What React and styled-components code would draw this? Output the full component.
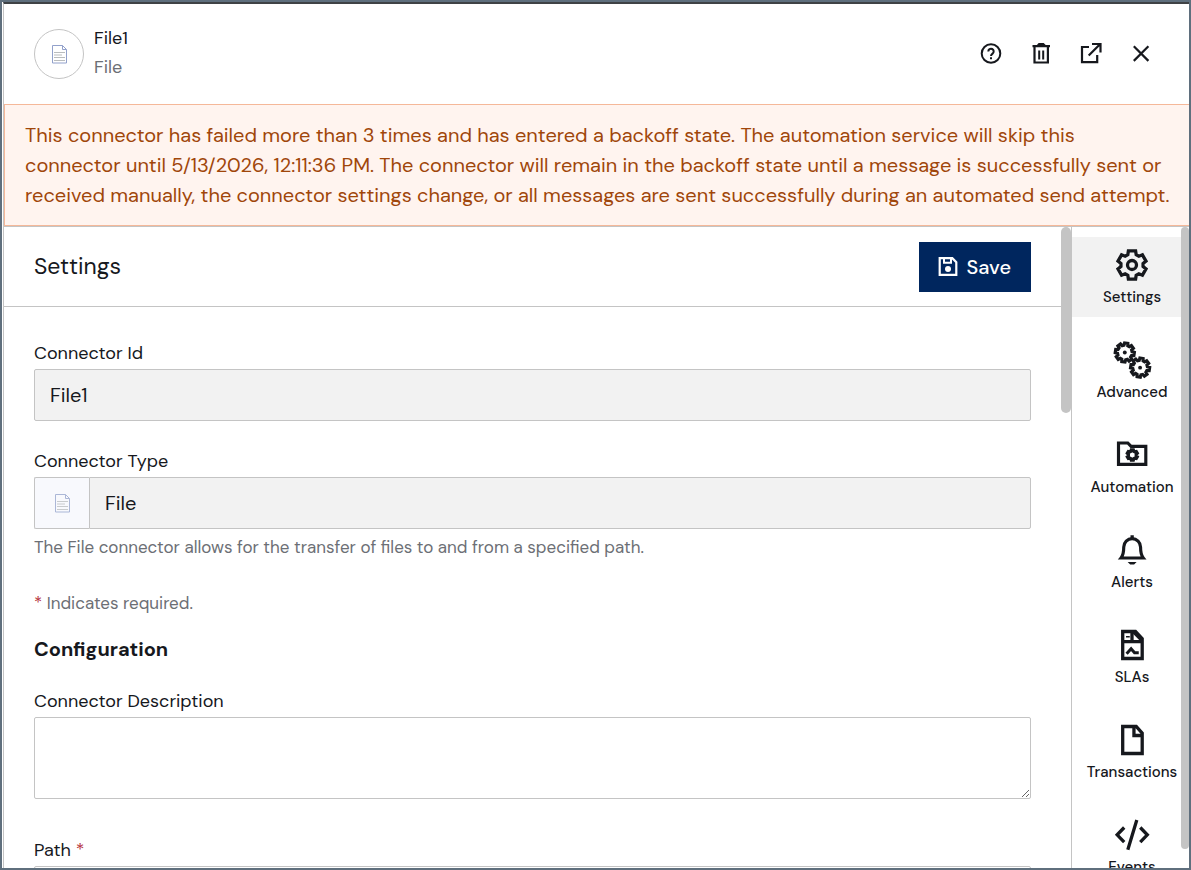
import React, { useState } from 'react';
import styled, { createGlobalStyle } from 'styled-components';

const GlobalStyle = createGlobalStyle`
  * {
    box-sizing: border-box;
  }
  body {
    margin: 0;
    background: #fff;
    color: #16181d;
    font-family: 'DM Sans', 'Open Sans', sans-serif;
    font-size: 20px;
  }
  button, input, textarea {
    font: inherit;
    color: inherit;
  }
`;

const Frame = styled.div`
  height: 100vh;
  border: 2px solid #5f6f7d;
  overflow: hidden;
`;

const Panel = styled.main`
  height: 100%;
  display: flex;
  flex-direction: column;
  margin-left: 1px;
  border-top: 2px solid #3f4245;
  border-left: 1px solid #c4c4c4;
`;

const Header = styled.header`
  display: flex;
  align-items: center;
  flex-shrink: 0;
  height: 100px;
  padding: 0 28px 0 30px;
`;

const Avatar = styled.div`
  display: flex;
  align-items: center;
  justify-content: center;
  width: 50px;
  height: 50px;
  margin-right: 10px;
  border: 1px solid #c4c4c4;
  border-radius: 50%;
`;

const Titles = styled.div`
  flex: 1;
  padding-bottom: 2px;
  font-size: 18px;
  line-height: 29px;
`;

const Name = styled.div`
  color: #16181d;
`;

const Kind = styled.div`
  color: #6c6f75;
`;

const Actions = styled.div`
  display: flex;
  gap: 10px;
`;

const IconButton = styled.button`
  display: flex;
  align-items: center;
  justify-content: center;
  width: 40px;
  height: 40px;
  padding: 0;
  border: 0;
  background: none;
  cursor: pointer;
`;

const Alert = styled.div`
  flex-shrink: 0;
  padding: 15px 16px 15px 20px;
  border: 1px solid #f5b899;
  border-right: 0;
  background: #fff4ef;
  color: #a0460a;
  line-height: 30px;
`;

const Content = styled.div`
  display: flex;
  flex: 1;
  min-height: 0;
  border-top: 1px solid #c4c4c4;
`;

const Main = styled.section`
  flex: 1;
  min-width: 0;
  overflow: hidden;
`;

const SectionHeader = styled.div`
  display: flex;
  align-items: center;
  justify-content: space-between;
  height: 80px;
  padding: 0 30px;
  border-bottom: 1px solid #c4c4c4;
`;

const SectionTitle = styled.h1`
  margin: 0;
  padding-bottom: 2px;
  font-size: 23px;
  font-weight: 400;
`;

const SaveButton = styled.button`
  display: flex;
  align-items: center;
  gap: 9px;
  height: 50px;
  padding: 0 20px 0 19px;
  border: 0;
  background: #00265e;
  color: #fff;
  font-weight: 500;
  cursor: pointer;
`;

const Form = styled.form`
  padding: 30px 30px 0;
`;

const Field = styled.div`
  margin-bottom: ${(p) => p.$gap || 24}px;
`;

const Label = styled.label`
  display: block;
  font-size: 18px;
  line-height: 32px;
`;

const Input = styled.input`
  display: block;
  width: 100%;
  min-width: 0;
  height: 52px;
  padding: 0 15px;
  border: 1px solid #c4c4c4;
  border-radius: 2px;
  background: #fff;
  &:read-only {
    background: #f2f2f2;
  }
`;

const InputGroup = styled.div`
  display: flex;
  ${Input} {
    flex: 1;
    border-radius: 0 2px 2px 0;
  }
`;

const Prefix = styled.span`
  display: flex;
  align-items: center;
  justify-content: center;
  width: 55px;
  border: 1px solid #c4c4c4;
  border-right: 0;
  border-radius: 2px 0 0 2px;
  background: #f8f9fd;
  svg {
    opacity: 0.75;
  }
`;

const TextArea = styled.textarea`
  display: block;
  width: 100%;
  height: 82px;
  padding: 10px 15px;
  border: 1px solid #c4c4c4;
  border-radius: 2px;
  background: #fff;
  resize: vertical;
`;

const Hint = styled.p`
  margin: ${(p) => p.$top || 0}px 0 0;
  color: #6c6f75;
  font-size: 17px;
  line-height: 24px;
`;

const Required = styled.span`
  color: #b5303c;
`;

const GroupTitle = styled.h2`
  margin: 19px 0 21px;
  font-size: 20px;
  font-weight: 700;
  line-height: 30px;
`;

const Track = styled.div`
  flex-shrink: 0;
  width: ${(p) => p.$width}px;
`;

const Thumb = styled.div`
  height: ${(p) => p.$size}%;
  border-radius: 5px;
  background: #c4c4c4;
`;

const Rail = styled.nav`
  display: flex;
  flex-direction: column;
  flex-shrink: 0;
  gap: 15px;
  width: 110px;
  padding-top: 10px;
  border-left: 1px solid #c4c4c4;
  overflow: hidden;
`;

const RailButton = styled.button`
  display: flex;
  flex-direction: column;
  align-items: center;
  flex-shrink: 0;
  height: 80px;
  padding: 10px 0 0 11px;
  border: 0;
  background: ${(p) => (p.$active ? '#f2f2f2' : 'none')};
  font-size: 15px;
  font-weight: 500;
  line-height: 28px;
  cursor: pointer;
`;

const Stroke = styled.svg`
  flex-shrink: 0;
  fill: none;
  stroke: currentColor;
  stroke-width: 2;
  overflow: visible;
`;

// closed outline of a gear: every tooth gives two root points and two tip points
const gearPath = (cx, cy, teeth, root, tip, rootHalf, tipHalf, turn = 0) => {
  const points = [];
  for (let i = 0; i < teeth; i++) {
    const a = (i / teeth) * Math.PI * 2 + turn;
    [[-rootHalf, root], [-tipHalf, tip], [tipHalf, tip], [rootHalf, root]].forEach(([t, r]) => {
      const x = cx + t * Math.cos(a) + r * Math.sin(a);
      const y = cy + t * Math.sin(a) - r * Math.cos(a);
      points.push(`${x.toFixed(2)} ${y.toFixed(2)}`);
    });
  }
  return `M${points.join('L')}Z`;
};

const Icon = ({ size = 24, children }) => (
  <Stroke width={size} height={size} viewBox="0 0 24 24" aria-hidden="true">{children}</Stroke>
);

const DocumentIcon = () => (
  <Stroke width="16" height="20" viewBox="0 0 16 20" aria-hidden="true">
    <path d="M1.5 1.500h10l4 4v13.500h-14zM11.500 1.500v4h4" stroke="#92a1cb" strokeWidth="1" />
    <path d="M3 8.500h11M3 11h8M3 13.500h11M3 16.500h11" stroke="#b9bcbd" strokeWidth="1" />
  </Stroke>
);

const HelpIcon = () => (
  <Icon>
    <circle cx="12" cy="11.5" r="9.3" />
    <path d="M9.300 9.500a2.700 2.700 0 1 1 4.300 2.100c-1 .8-1.600 1.100-1.600 2.400" />
    <path d="M11 15.300h2v2h-2z" fill="currentColor" stroke="none" />
  </Icon>
);

const TrashIcon = () => (
  <Icon>
    <path d="M3.500 4.200h17.500M5.500 5v15.500h13.400V5" strokeWidth="2.200" />
    <path d="M10.200 8.500v9M14.200 8.500v9" />
    <path d="M8.200 4V2.500l1.500-1.400h5l1.500 1.400V4z" fill="currentColor" stroke="none" />
  </Icon>
);

const ExternalIcon = () => (
  <Icon>
    <path d="M10 5H3v15.200h15.200V13M9.700 13.500L21 2.200M13 2h8.500v8.500" strokeWidth="2.200" />
  </Icon>
);

const CloseIcon = () => (
  <Icon>
    <path d="M4.800 4.300l14.600 14.600M19.400 4.300L4.800 18.900" strokeWidth="2.200" />
  </Icon>
);

const SaveIcon = () => (
  <Stroke width="20" height="20" viewBox="2 2 20 20" aria-hidden="true">
    <path d="M3.700 3.200h12.600l4 4V19.800H3.700z" strokeWidth="2.200" />
    <path d="M8 3v4.800h7V3" />
    <circle cx="12" cy="14" r="3" fill="currentColor" stroke="none" />
  </Stroke>
);

const SettingsIcon = () => (
  <Icon size={36}>
    <path d={gearPath(12, 12, 6, 6.9, 9.4, 2.8, 2.4)} strokeWidth="2.200" />
    <circle cx="12" cy="12" r="3" strokeWidth="2.200" />
  </Icon>
);

const AdvancedIcon = () => (
  <Icon size={36}>
    <path d={gearPath(7.2, 7, 8, 4.7, 6.3, 1.3, 1.1, 0.15)} strokeWidth="2.100" />
    <path d={gearPath(17.4, 17.1, 8, 4.7, 6.3, 1.3, 1.1, 0.15)} strokeWidth="2.100" />
    <circle cx="7.2" cy="7" r="1.3" fill="currentColor" stroke="none" />
    <circle cx="17.4" cy="17.1" r="1.3" fill="currentColor" stroke="none" />
  </Icon>
);

const AutomationIcon = () => (
  <Icon size={36}>
    <path d="M3 4h6.200l2.200 2.200H21.200v12H3z" strokeWidth="2.100" />
    <path d={gearPath(12.200, 12, 6, 2.4, 3.5, 1, 0.7)} strokeWidth="2.100" />
  </Icon>
);

const AlertsIcon = () => (
  <Icon size={36}>
    <path d="M4.700 17.300C6.200 15.400 6.500 13.200 6.500 10a5.600 5.600 0 0 1 11.200 0c0 3.200.3 5.400 1.800 7.300z" strokeWidth="2.100" />
    <path d="M11 4V2.100h2.200V4zM9.100 20h6l-1.700 1.700h-2.600z" fill="currentColor" stroke="none" />
  </Icon>
);

const SlasIcon = () => (
  <Icon size={36}>
    <path d="M5.800 3h8.500L18.800 7.800V21H5.800zM12 3v6.200M6 9.700h13" strokeWidth="2.200" />
    <path d="M13 3.500l5.500 5.500" />
    <path d="M8 6.500h2.500" strokeWidth="1" />
    <path d="M8.400 17.800l3-3.300 2.300 2.700h2.800" />
  </Icon>
);

const TransactionsIcon = () => (
  <Icon size={36}>
    <path d="M5.800 3h9l4 4.500V21h-13zM13.300 3v6h5.500" strokeWidth="2.200" />
  </Icon>
);

const EventsIcon = () => (
  <Icon size={36}>
    <path d="M6.800 7l-4.700 4.900 4.700 4.900M17.500 7l4.700 4.900-4.700 4.900M15.200 2L9.200 21.800" strokeWidth="2.200" />
  </Icon>
);

const actions = [
  { label: 'Help', Glyph: HelpIcon },
  { label: 'Delete', Glyph: TrashIcon },
  { label: 'Open in new window', Glyph: ExternalIcon },
  { label: 'Close', Glyph: CloseIcon },
];

const tabs = [
  { label: 'Settings', Glyph: SettingsIcon },
  { label: 'Advanced', Glyph: AdvancedIcon },
  { label: 'Automation', Glyph: AutomationIcon },
  { label: 'Alerts', Glyph: AlertsIcon },
  { label: 'SLAs', Glyph: SlasIcon },
  { label: 'Transactions', Glyph: TransactionsIcon },
  { label: 'Events', Glyph: EventsIcon },
];

const App = () => {
  const [activeTab, setActiveTab] = useState('Settings');
  const [description, setDescription] = useState('');
  const [path, setPath] = useState('');

  return (
    <Frame>
      <GlobalStyle />
      <Panel>
        <Header>
          <Avatar>
            <DocumentIcon />
          </Avatar>
          <Titles>
            <Name>File1</Name>
            <Kind>File</Kind>
          </Titles>
          <Actions>
            {actions.map(({ label, Glyph }) => (
              <IconButton key={label} type="button" aria-label={label}>
                <Glyph />
              </IconButton>
            ))}
          </Actions>
        </Header>

        <Alert role="alert">
          This connector has failed more than 3 times and has entered a backoff state. The automation
          service will skip this connector until 5/13/2026, 12:11:36 PM. The connector will remain in
          the backoff state until a message is successfully sent or received manually, the connector
          settings change, or all messages are sent successfully during an automated send attempt.
        </Alert>

        <Content>
          <Main>
            <SectionHeader>
              <SectionTitle>Settings</SectionTitle>
              <SaveButton type="submit" form="connector-form">
                <SaveIcon />
                Save
              </SaveButton>
            </SectionHeader>

            <Form id="connector-form" onSubmit={(e) => e.preventDefault()}>
              <Field>
                <Label htmlFor="connectorId">Connector Id</Label>
                <Input id="connectorId" value="File1" readOnly />
              </Field>
              <Field $gap={32}>
                <Label htmlFor="connectorType">Connector Type</Label>
                <InputGroup>
                  <Prefix>
                    <DocumentIcon />
                  </Prefix>
                  <Input id="connectorType" value="File" readOnly />
                </InputGroup>
                <Hint $top={6}>
                  The File connector allows for the transfer of files to and from a specified path.
                </Hint>
              </Field>

              <Hint>
                <Required>*</Required> Indicates required.
              </Hint>
              <GroupTitle>Configuration</GroupTitle>

              <Field $gap={35}>
                <Label htmlFor="description">Connector Description</Label>
                <TextArea
                  id="description"
                  value={description}
                  onChange={(e) => setDescription(e.target.value)}
                />
              </Field>
              <Field>
                <Label htmlFor="path">
                  Path <Required>*</Required>
                </Label>
                <Input id="path" value={path} onChange={(e) => setPath(e.target.value)} />
              </Field>
            </Form>
          </Main>

          <Track $width={10}>
            <Thumb $size={29} />
          </Track>

          <Rail aria-label="Connector sections">
            {tabs.map(({ label, Glyph }) => (
              <RailButton
                key={label}
                type="button"
                $active={label === activeTab}
                onClick={() => setActiveTab(label)}
              >
                <Glyph />
                {label}
              </RailButton>
            ))}
          </Rail>

          <Track $width={8}>
            <Thumb $size={97} />
          </Track>
        </Content>
      </Panel>
    </Frame>
  );
};

export default App;
